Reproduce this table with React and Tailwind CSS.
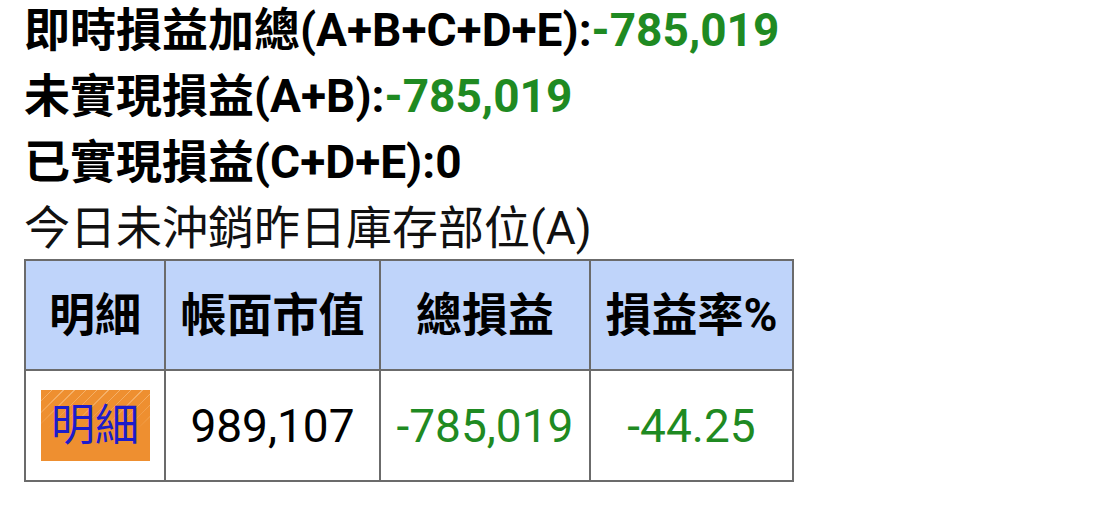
import React from "react";

const green = "text-[#1f8a22]";

function SummaryLine({ label, value, color }) {
  return (
    <div className="font-bold">
      {label}
      <span className={color}>{value}</span>
    </div>
  );
}

export default function App() {
  return (
    <div className="w-[1096px] h-[526px] bg-white text-black font-['Roboto','Noto_Sans_CJK_TC',sans-serif] text-[46px] leading-[66px] pl-[24px] -mt-[3px]">
      <SummaryLine label="即時損益加總(A+B+C+D+E):" value="-785,019" color={green} />
      <SummaryLine label="未實現損益(A+B):" value="-785,019" color={green} />
      <SummaryLine label="已實現損益(C+D+E):" value="0" color="text-black" />
      <div className="text-[#111]">今日未沖銷昨日庫存部位(A)</div>

      {/* 庫存表 */}
      <table className="border-collapse border-2 border-[#6b6b6b] -mt-[2px]">
        <thead>
          <tr className="bg-[#bfd4fa] h-[110px]">
            <th className="w-[140px] border-2 border-[#6b6b6b] font-bold">明細</th>
            <th className="w-[215px] border-2 border-[#6b6b6b] font-bold">帳面市值</th>
            <th className="w-[210px] border-2 border-[#6b6b6b] font-bold">總損益</th>
            <th className="w-[203px] border-2 border-[#6b6b6b] font-bold">損益率%</th>
          </tr>
        </thead>
        <tbody>
          <tr className="h-[111px]">
            <td className="border-2 border-[#6b6b6b]">
              <div className="flex justify-center">
                <button
                  type="button"
                  className="w-[109px] h-[71px] flex items-center justify-center text-[#1c1ccc] text-[44px] bg-[linear-gradient(to_bottom,rgba(239,143,48,0)_0%,#ee8f30_55%),repeating-linear-gradient(-45deg,#ee8f30_0px,#ee8f30_7px,#f6b46e_7px,#f6b46e_8px)] bg-[#ee8f30]"
                >
                  明細
                </button>
              </div>
            </td>
            <td className="border-2 border-[#6b6b6b] text-center">989,107</td>
            <td className={`border-2 border-[#6b6b6b] text-center ${green}`}>-785,019</td>
            <td className={`border-2 border-[#6b6b6b] text-center ${green}`}>-44.25</td>
          </tr>
        </tbody>
      </table>
    </div>
  );
}
